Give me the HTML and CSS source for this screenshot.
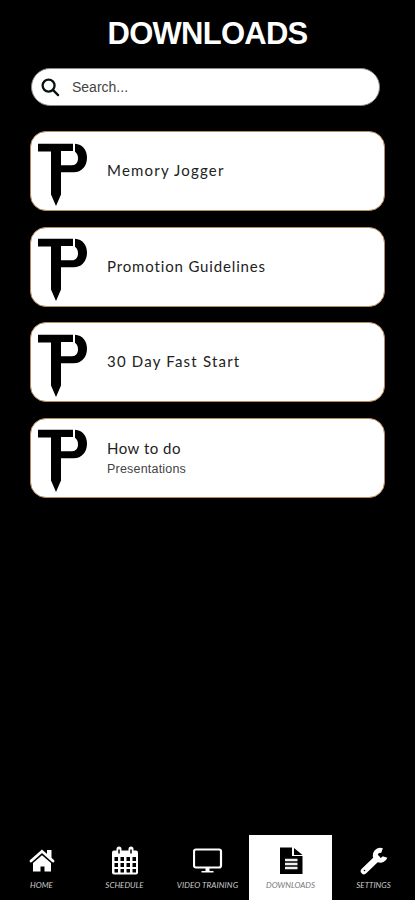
FILE: index.html
```html
<!DOCTYPE html>
<html lang="en">
<head>
<meta charset="utf-8">
<title>Downloads</title>
<link rel="stylesheet" href="styles.css">
</head>
<body>
<svg class="defs" aria-hidden="true">
  <symbol id="logo" viewBox="0 0 50 64">
    <path d="M0 .7h35v7.300H23v43.500L18 63l-5-11.500V8.500H0z"/>
    <path d="M37 .7C44.500 1.200 49 7 49 14.500 49 23 44 29.300 35.500 29.300H22.500v-7H34c4 0 6-3 6-7 0-3-1-5-3-6.500z"/>
  </symbol>
</svg>
<div class="screen">
  <h1 class="title">DOWNLOADS</h1>
  <div class="search">
    <svg class="search-icon" viewBox="0 0 20 20"><circle cx="8" cy="8" r="6.300"/><path d="M12.500 12.500l5.500 5.500"/></svg>
    <span class="placeholder">Search...</span>
  </div>
  <main class="list">
    <article class="card"><svg class="logo"><use href="#logo"/></svg><div class="text"><p class="name">Memory Jogger</p></div></article>
    <article class="card"><svg class="logo"><use href="#logo"/></svg><div class="text"><p class="name promo">Promotion Guidelines</p></div></article>
    <article class="card"><svg class="logo"><use href="#logo"/></svg><div class="text"><p class="name">30 Day Fast Start</p></div></article>
    <article class="card"><svg class="logo"><use href="#logo"/></svg><div class="text two"><p class="name how">How to do</p><p class="sub">Presentations</p></div></article>
  </main>
  <nav class="nav">
    <a class="tab">
      <svg class="icon" viewBox="0 0 30 30"><path d="M15 7.500l9 7.500V25.500h-6.500v-5h-4v5H6V15z" fill="currentColor"/><path d="M4 16.500L15 7 26 16.500" fill="none" stroke="#000" stroke-width="3.500"/><path d="M4 15L15 5.300l11 9.700" fill="none" stroke="currentColor" stroke-width="2.800" stroke-linecap="round"/><path d="M20 4h4.500v8.500L20 9z" fill="currentColor"/></svg>
      <span class="label">HOME</span>
    </a>
    <a class="tab">
      <svg class="icon" viewBox="0 0 30 30"><rect x="2" y="4.500" width="26" height="24" rx="2" fill="currentColor"/><path d="M9 3v4M21 3v4" stroke="currentColor" stroke-width="5" stroke-linecap="round"/><path d="M9 3.500v4M21 3.500v4" stroke="#000" stroke-width="1.500"/><path d="M4.500 11h3.500v4H4.500zm6 0h3.500v4h-3.500zm6 0h3.500v4h-3.500zm6 0h3.500v4h-3.500zM4.500 17h3.500v4H4.500zm6 0h3.500v4h-3.500zm6 0h3.500v4h-3.500zm6 0h3.500v4h-3.500zM4.500 23h3.500v3.500H4.500zm6 0h3.500v3.500h-3.500zm6 0h3.500v3.500h-3.500zm6 0h3.500v3.500h-3.500z" fill="#000"/></svg>
      <span class="label">SCHEDULE</span>
    </a>
    <a class="tab">
      <svg class="icon" viewBox="0 0 30 30"><rect x="1" y="3.500" width="27" height="18" rx="2" fill="none" stroke="currentColor" stroke-width="2.200"/><path d="M12.500 21.500h4V25h4v1.500h-12V25h4z" fill="currentColor"/></svg>
      <span class="label video">VIDEO TRAINING</span>
    </a>
    <a class="tab active">
      <svg class="icon" viewBox="0 0 30 30"><path d="M4 1.500H16v8.500h10.500v18H4z" fill="currentColor"/><path d="M18 2l8.500 7h-8.500z" fill="currentColor"/><path d="M9 14h12.500M9 18h12.500M9 22h12.500" stroke="#eee" stroke-width="2.500"/></svg>
      <span class="label">DOWNLOADS</span>
    </a>
    <a class="tab">
      <svg class="icon" viewBox="0 0 30 30"><path d="M5 25L18 12.500" stroke="currentColor" stroke-width="6.500" stroke-linecap="round"/><path d="M23 4.600a5 5 0 1 0 3 6.400" fill="none" stroke="currentColor" stroke-width="5"/><circle cx="5.500" cy="24.500" r=".8" fill="#000"/></svg>
      <span class="label">SETTINGS</span>
    </a>
  </nav>
</div>
</body>
</html>
```
FILE: styles.css
```css
* { box-sizing: border-box; margin: 0; }
body { background: #000; }
.defs { display: none; }
.screen {
  width: 415px;
  height: 900px;
  display: flex;
  flex-direction: column;
  background: #000;
  overflow: hidden;
  font-family: Lato, sans-serif;
}
.title {
  padding-top: 15px;
  height: 68px;
  text-align: center;
  color: #fff;
  font: bold 31px/38px "Liberation Sans", sans-serif;
  letter-spacing: -0.75px;
}
.search {
  width: 349px;
  height: 38px;
  margin-left: 31px;
  padding-left: 9px;
  border: 1px solid #888;
  border-radius: 19px;
  background: #fff;
  display: flex;
  align-items: center;
}
.search-icon {
  width: 19px;
  height: 19px;
  fill: none;
  stroke: #07110f;
  stroke-width: 2.4;
  stroke-linecap: round;
}
.placeholder {
  margin-left: 12px;
  color: #444;
  font: 14px/18px "Liberation Sans", sans-serif;
}
.list {
  margin: 25px 30px 0;
  display: flex;
  flex-direction: column;
  gap: 15.5px;
}
.card {
  height: 80px;
  padding-left: 7px;
  border: 1px solid #b78b58;
  border-radius: 16px;
  background: #fff;
  display: flex;
  align-items: center;
}
.logo { width: 50px; height: 64px; margin-top: 7px; fill: #000; }
.text { margin-left: 19px; margin-top: -1px; color: #222; }
.two { padding-top: 2px; }
.name { font-size: 15px; line-height: 21px; letter-spacing: 1.2px; white-space: nowrap; }
.promo { letter-spacing: 0.85px; }
.how { letter-spacing: 0.5px; }
.sub { color: #444; font: 12.5px/20px "Liberation Sans", sans-serif; letter-spacing: 0.2px; }
.nav {
  height: 65px;
  margin-top: auto;
  display: grid;
  grid-template-columns: repeat(5, 1fr);
}
.tab {
  display: flex;
  flex-direction: column;
  align-items: center;
  padding-top: 11px;
  color: #fff;
}
.active { background: #fff; color: #000; }
.icon { width: 30px; height: 30px; }
.label {
  margin-top: 4px;
  color: #ccc;
  font-size: 8px;
  line-height: 11px;
  font-style: italic;
  white-space: nowrap;
}
.video { letter-spacing: 0.12px; }
.active .label { color: #777; }
```
